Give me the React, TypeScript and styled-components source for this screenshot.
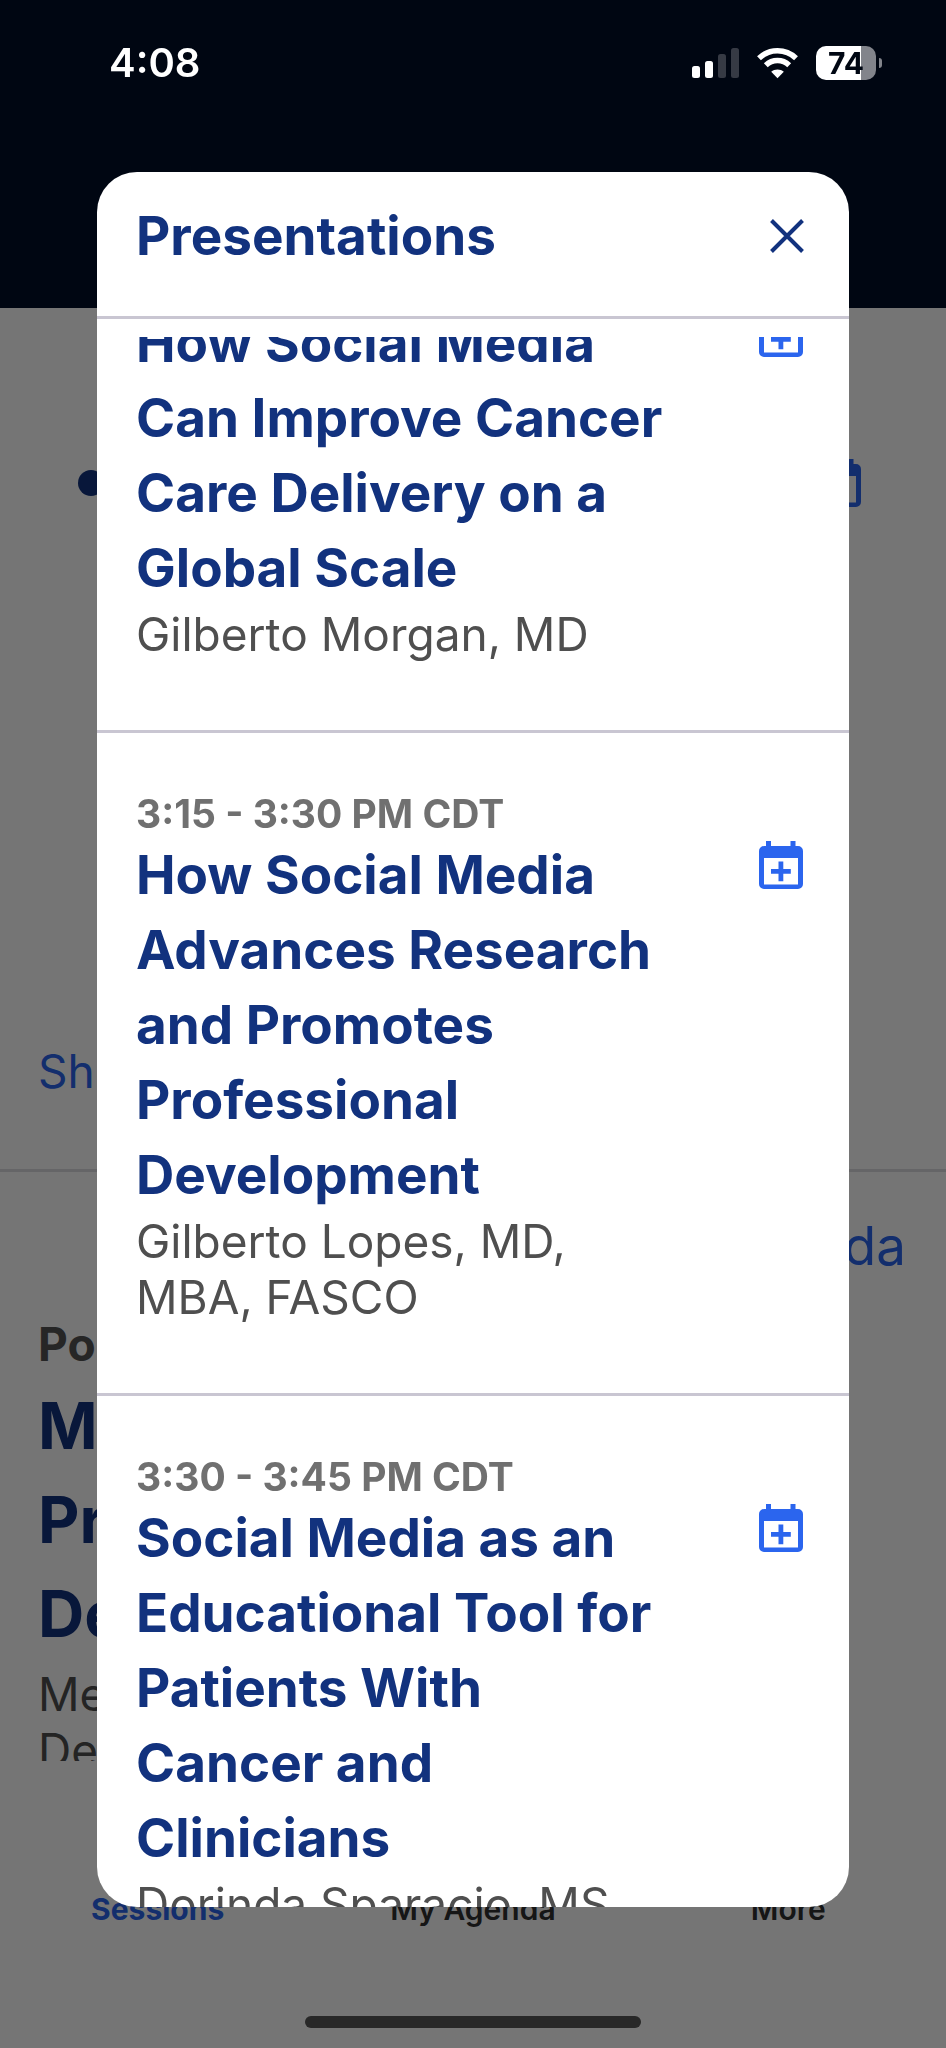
import React, { useLayoutEffect, useRef } from "react";
import styled, { createGlobalStyle } from "styled-components";

const navy = "#12327e";
const blue = "#2b65ee";

const GlobalStyle = createGlobalStyle`
  * { box-sizing: border-box; }
  body {
    margin: 0;
    background: #ffffff;
    font-family: Inter, "Liberation Sans", sans-serif;
  }
  h1, h2, h3, p, ul { margin: 0; padding: 0; font-weight: inherit; }
  button { border: 0; padding: 0; background: none; font: inherit; cursor: pointer; }
  svg { display: block; }
`;

const Screen = styled.div`
  height: 100vh;
  display: flex;
  flex-direction: column;
  overflow: hidden;
`;

const AppHeader = styled.header`
  flex: none;
  height: 308px;
  background: #000f29;
`;

const StatusBar = styled.div`
  position: fixed;
  inset: 0 0 auto 0;
  z-index: 3;
  display: flex;
  align-items: center;
  justify-content: space-between;
  height: 126px;
  padding: 0 64px 0 109px;
  color: #ffffff;
`;

const Clock = styled.time`
  font-size: 40px;
  line-height: 48px;
  font-weight: 600;
`;

const StatusIcons = styled.div`
  display: flex;
  align-items: center;
  gap: 18px;
`;

const Battery = styled.div`
  display: flex;
  align-items: center;
  gap: 3px;
`;

const BatteryBody = styled.div`
  width: 60px;
  height: 34px;
  border-radius: 10px;
  background: linear-gradient(to right, #ffffff 75%, #82848b 75%);
  color: #000713;
  font-size: 30px;
  line-height: 34px;
  font-weight: 700;
  text-align: center;
`;

const BatteryTip = styled.span`
  width: 3px;
  height: 10px;
  border-radius: 0 3px 3px 0;
  background: #82848b;
`;

const Feed = styled.main`
  flex: 1;
  min-height: 0;
  overflow: hidden;
`;

const SessionCard = styled.article`
  padding-bottom: 70px;
  border-bottom: 3px solid #dddde0;
`;

const SessionRow = styled.div`
  display: flex;
  align-items: center;
  justify-content: space-between;
  padding: 151px 85px 536px 78px;
`;

const Dot = styled.span`
  width: 26px;
  height: 26px;
  border-radius: 50%;
  background: ${navy};
`;

const ShowLink = styled.a`
  display: block;
  padding: 0 38px;
  color: ${blue};
  font-size: 46px;
  line-height: 56px;
  text-decoration: none;
`;

const PosterCard = styled.article`
  display: flex;
  flex-direction: column;
  padding: 42px 40px 0 38px;
`;

const AgendaLink = styled.a`
  align-self: flex-end;
  margin-bottom: 38px;
  color: ${blue};
  font-size: 53px;
  line-height: 64px;
  text-decoration: none;
`;

const PosterKind = styled.p`
  margin-bottom: 7px;
  color: #545454;
  font-size: 46px;
  line-height: 56px;
  font-weight: 700;
`;

const PosterTitle = styled.h2`
  margin-bottom: 5px;
  color: ${navy};
  font-size: 64px;
  line-height: 94px;
  font-weight: 700;
`;

const Line = styled.span`
  display: block;
`;

const PersonText = styled.p`
  color: #4f4f4f;
  font-size: 46px;
  line-height: 56px;
`;

const TabBar = styled.nav`
  flex: none;
  display: grid;
  grid-template-columns: repeat(3, 1fr);
  height: 287px;
  padding-top: 130px;
  background: #ffffff;
`;

const Tab = styled.button<{ $active?: boolean }>`
  height: 36px;
  color: ${(p) => (p.$active ? blue : "#303030")};
  font-size: 30px;
  line-height: 36px;
  font-weight: ${(p) => (p.$active ? 700 : 600)};
`;

const HomeIndicator = styled.div`
  position: fixed;
  bottom: 20px;
  left: 50%;
  z-index: 3;
  width: 336px;
  height: 12px;
  margin-left: -168px;
  border-radius: 6px;
  background: #282828;
`;

const Overlay = styled.div`
  position: fixed;
  inset: 0;
  z-index: 2;
  display: flex;
  padding: 172px 97px 141px;
  background: rgba(0, 0, 0, 0.54);
`;

const Dialog = styled.section`
  flex: 1;
  min-width: 0;
  display: flex;
  flex-direction: column;
  overflow: hidden;
  border-radius: 40px;
  background: #ffffff;
`;

const DialogHeader = styled.header`
  flex: none;
  display: flex;
  align-items: flex-start;
  justify-content: space-between;
  height: 147px;
  margin-bottom: 18px;
  padding: 27px 45px 0 39px;
  border-bottom: 3px solid #c9c6d2;
`;

const Heading = styled.h1`
  color: ${navy};
  font-size: 53px;
  line-height: 75px;
  font-weight: 700;
`;

const CloseButton = styled.button`
  margin-top: 20px;
`;

const PresentationList = styled.ul`
  flex: 1;
  min-height: 0;
  overflow-y: auto;
  scrollbar-width: none;
  list-style: none;
`;

const PresentationItem = styled.li`
  padding: 57px 46px 68px 39px;
  border-bottom: 3px solid #c9c6d2;
`;

const PresentationRow = styled.div`
  display: flex;
  align-items: flex-start;
  justify-content: space-between;
`;

const TimeText = styled.p`
  color: #707070;
  font-size: 39px;
  line-height: 48px;
  font-weight: 700;
`;

const PresentationTitle = styled.h3`
  color: ${navy};
  font-size: 53px;
  line-height: 75px;
  font-weight: 700;
`;

const AddButton = styled.button`
  margin-top: 3px;
`;

function CalendarPlus() {
  return (
    <svg width="44" height="48" viewBox="0 0 44 48" aria-hidden="true">
      <path
        fill={blue}
        fillRule="evenodd"
        d="M7 0h5v5h19.500V0h5v5H39a5 5 0 0 1 5 5v33a5 5 0 0 1-5 5H5a5 5 0 0 1-5-5V10a5 5 0 0 1 5-5h2zM5 17v26.500h34V17z"
      />
      <path fill={blue} d="M19.500 20.500h4.800v7.500h7.500v4.700h-7.500v7.500h-4.800v-7.500H12V28h7.500z" />
    </svg>
  );
}

function Signal() {
  return (
    <svg width="47" height="32" viewBox="0 0 47 32" aria-hidden="true">
      <rect x="0" y="19" width="8" height="12" rx="2.500" fill="#fff" />
      <rect x="13" y="14" width="8" height="17" rx="2.500" fill="#fff" />
      <rect x="26" y="7" width="8" height="24" rx="2.500" fill="#363a44" />
      <rect x="39" y="1" width="8" height="30" rx="2.500" fill="#363a44" />
    </svg>
  );
}

function Wifi() {
  return (
    <svg width="41" height="32" viewBox="0 0 41 32" aria-hidden="true">
      <g fill="none" stroke="#fff" strokeWidth="5.600">
        <path d="M2 11.200C12.500 1.300 28.500 1.300 39 11.200" />
        <path d="M8.800 18.200c6.700-6.300 16.700-6.300 23.400 0" />
      </g>
      <path fill="#fff" d="M20.500 31.200l-6.300-6.400c3.500-3.200 9.100-3.200 12.600 0z" />
    </svg>
  );
}

function CloseIcon() {
  return (
    <svg width="34" height="34" viewBox="0 0 34 34" aria-hidden="true">
      <path d="M1.500 1.500l31 31M32.500 1.500l-31 31" stroke={navy} strokeWidth="4" />
    </svg>
  );
}

const presentations = [
  {
    time: "",
    title: ["How Social Media", "Can Improve Cancer", "Care Delivery on a", "Global Scale"],
    speaker: ["Gilberto Morgan, MD"],
  },
  {
    time: "3:15 - 3:30 PM CDT",
    title: ["How Social Media", "Advances Research", "and Promotes", "Professional", "Development"],
    speaker: ["Gilberto Lopes, MD,", "MBA, FASCO"],
  },
  {
    time: "3:30 - 3:45 PM CDT",
    title: ["Social Media as an", "Educational Tool for", "Patients With", "Cancer and", "Clinicians"],
    speaker: ["Dorinda Sparacio, MS"],
  },
];

const lines = (items: string[]) => items.map((t) => <Line key={t}>{t} </Line>);

export default function App() {
  const listRef = useRef<HTMLUListElement>(null);

  // Open the list part-way through its first entry.
  useLayoutEffect(() => {
    if (listRef.current) listRef.current.scrollTop = 88;
  }, []);

  return (
    <>
      <GlobalStyle />
      <StatusBar>
        <Clock>4:08</Clock>
        <StatusIcons>
          <Signal />
          <Wifi />
          <Battery>
            <BatteryBody>74</BatteryBody>
            <BatteryTip />
          </Battery>
        </StatusIcons>
      </StatusBar>

      <Screen>
        <AppHeader />
        <Feed>
          <SessionCard>
            <SessionRow>
              <Dot />
              <CalendarPlus />
            </SessionRow>
            <ShowLink href="#show">Sh</ShowLink>
          </SessionCard>
          <PosterCard>
            <AgendaLink href="#agenda">da</AgendaLink>
            <PosterKind>Po</PosterKind>
            <PosterTitle>{lines(["M", "Pr", "De"])}</PosterTitle>
            <PersonText>{lines(["Me", "De"])}</PersonText>
          </PosterCard>
        </Feed>
        <TabBar>
          <Tab $active>Sessions</Tab>
          <Tab>My Agenda</Tab>
          <Tab>More</Tab>
        </TabBar>
      </Screen>

      <Overlay>
        <Dialog role="dialog" aria-modal="true" aria-labelledby="dialog-title">
          <DialogHeader>
            <Heading id="dialog-title">Presentations</Heading>
            <CloseButton aria-label="Close">
              <CloseIcon />
            </CloseButton>
          </DialogHeader>
          <PresentationList ref={listRef}>
            {presentations.map((p) => (
              <PresentationItem key={p.speaker[0]}>
                {p.time && <TimeText>{p.time}</TimeText>}
                <PresentationRow>
                  <PresentationTitle>{lines(p.title)}</PresentationTitle>
                  <AddButton aria-label="Add to agenda">
                    <CalendarPlus />
                  </AddButton>
                </PresentationRow>
                <PersonText>{lines(p.speaker)}</PersonText>
              </PresentationItem>
            ))}
          </PresentationList>
        </Dialog>
      </Overlay>
      <HomeIndicator />
    </>
  );
}
